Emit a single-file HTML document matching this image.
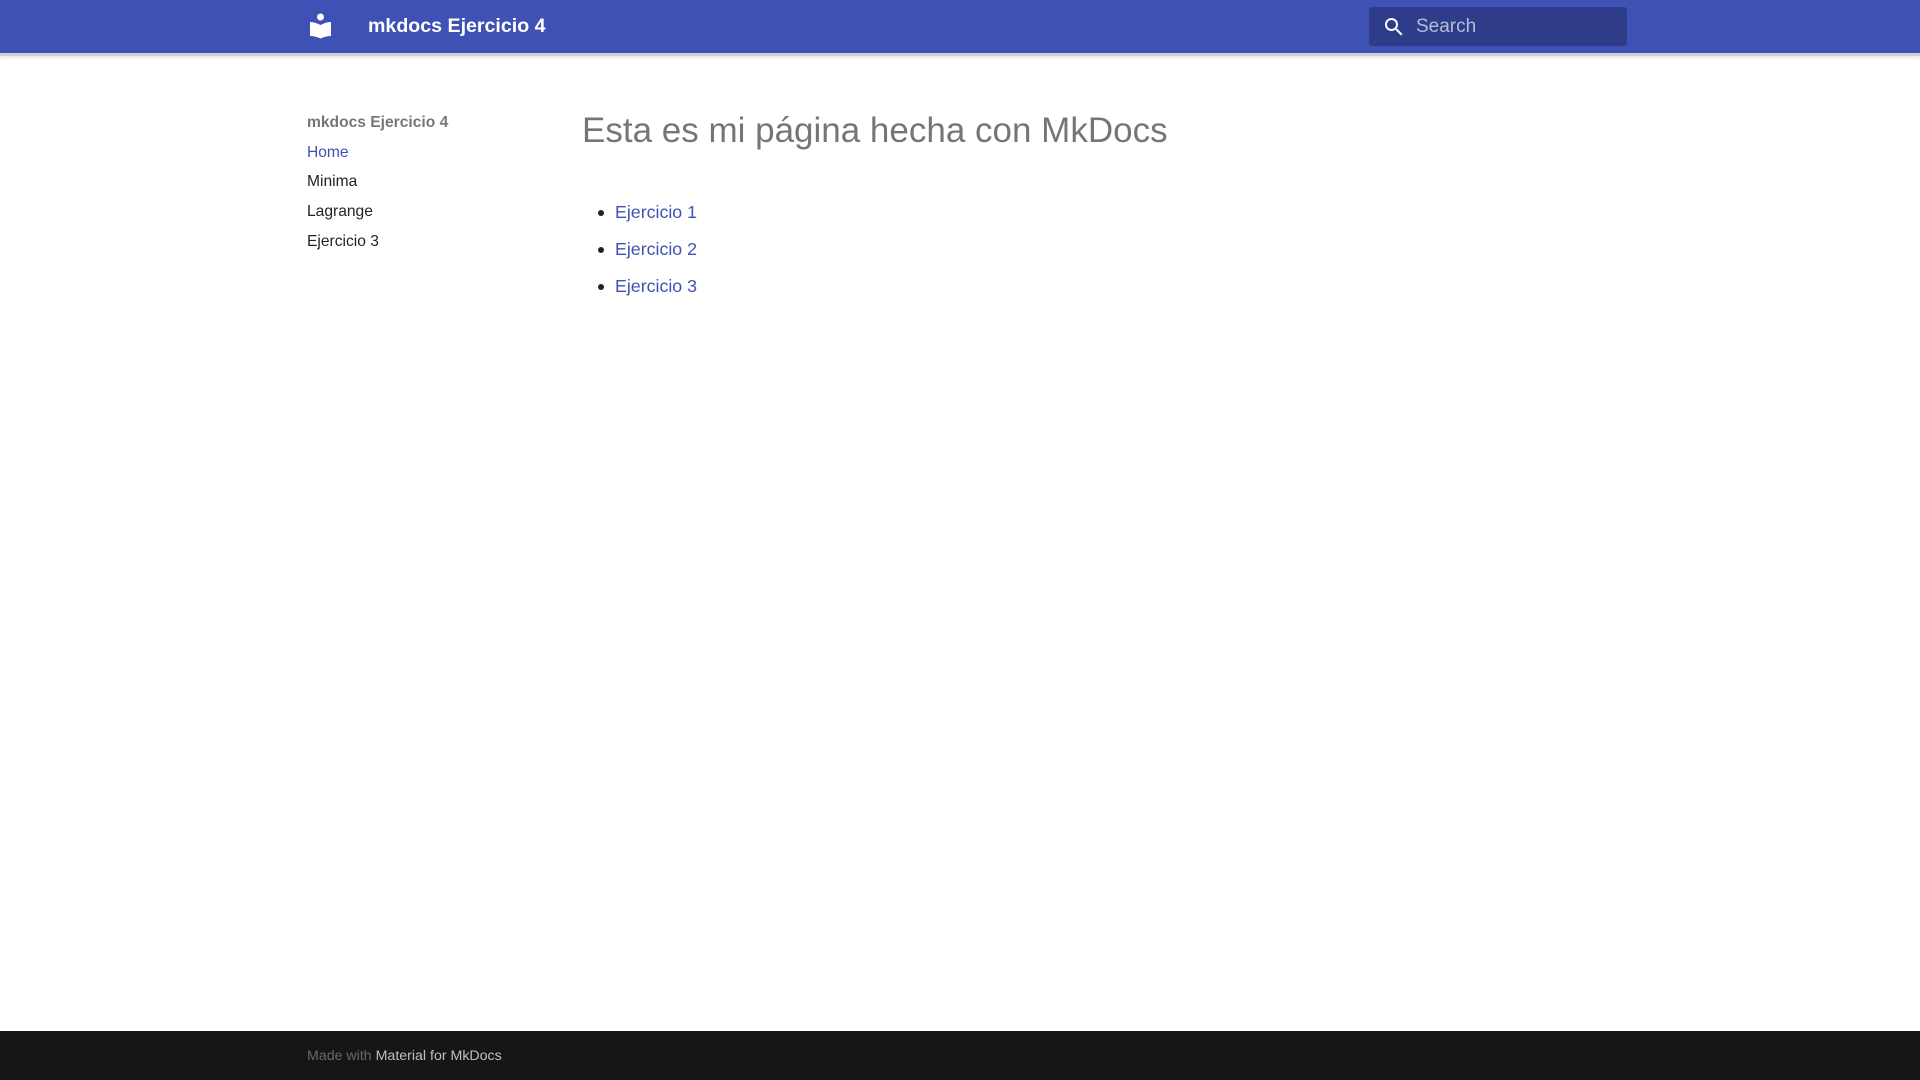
<!DOCTYPE html>
<html><head><meta charset="utf-8"><style>
*{margin:0;padding:0;box-sizing:border-box}
body{width:1920px;height:1080px;position:relative;font-family:"Liberation Sans",Arial,sans-serif;background:#fff;overflow:hidden}
.hdr{position:absolute;left:0;top:0;width:1920px;height:53px;background:#3f51b5;box-shadow:0 3px 0 #d0d0d0,0 5px 3px rgba(0,0,0,.1)}
.title{position:absolute;left:368px;top:15px;color:#fff;font-weight:bold;font-size:19.6px}
.search{position:absolute;left:1369px;top:7px;width:258px;height:39px;background:#2f3c89;border-radius:3px}
.search span{position:absolute;left:47px;top:9px;color:rgba(255,255,255,.65);font-size:19px}
.nav{position:absolute;left:307px;font-size:15.6px;color:rgba(0,0,0,.87)}
.h1{position:absolute;left:582px;top:111px;font-size:35px;color:rgba(0,0,0,.54)}
.li{position:absolute;left:615px;font-size:17.8px;color:#3f51b5}
.dot{position:absolute;left:598px;width:6px;height:6px;border-radius:50%;background:#222}
.ftr{position:absolute;left:0;top:1031px;width:1920px;height:49px;background:#161616}
.ftr div{position:absolute;left:307px;top:17px;font-size:14.2px;color:rgba(255,255,255,.35)}
.ftr b{font-weight:normal;color:rgba(255,255,255,.72)}
</style></head><body>
<div class="hdr">
<svg style="position:absolute;left:308px;top:13px" width="25" height="26" viewBox="0 0 25 26"><circle cx="12.5" cy="4" r="3.5" fill="#fff"/><path d="M2 9 Q7 9 12.5 12 Q18 9 23 9 V23 Q18 23 12.5 25.5 Q7 23 2 23 Z" fill="#fff"/></svg>
<div class="title">mkdocs Ejercicio 4</div>
<div class="search"><svg style="position:absolute;left:13px;top:8px" width="24" height="24" viewBox="0 0 24 24"><path fill="#fff" d="M9.5 3A6.5 6.5 0 0 1 16 9.5c0 1.610-.59 3.09-1.56 4.23l.27.27h.79l5 5-1.5 1.5-5-5v-.79l-.27-.27A6.516 6.516 0 0 1 9.5 16 6.5 6.5 0 0 1 3 9.5 6.5 6.5 0 0 1 9.5 3m0 2C7 5 5 7 5 9.5S7 14 9.5 14 14 12 14 9.5 12 5 9.5 5z"/></svg><span>Search</span></div>
</div>
<div class="nav" style="top:114px;font-weight:bold;color:rgba(0,0,0,.54)">mkdocs Ejercicio 4</div>
<div class="nav" style="top:144px;color:#3f51b5">Home</div>
<div class="nav" style="top:173px">Minima</div>
<div class="nav" style="top:203px">Lagrange</div>
<div class="nav" style="top:233px">Ejercicio 3</div>
<div class="h1">Esta es mi página hecha con MkDocs</div>
<div class="dot" style="top:210px"></div><div class="li" style="top:202px">Ejercicio 1</div>
<div class="dot" style="top:247px"></div><div class="li" style="top:239px">Ejercicio 2</div>
<div class="dot" style="top:284px"></div><div class="li" style="top:276px">Ejercicio 3</div>
<div class="ftr"><div>Made with <b>Material for MkDocs</b></div></div>
</body></html>
